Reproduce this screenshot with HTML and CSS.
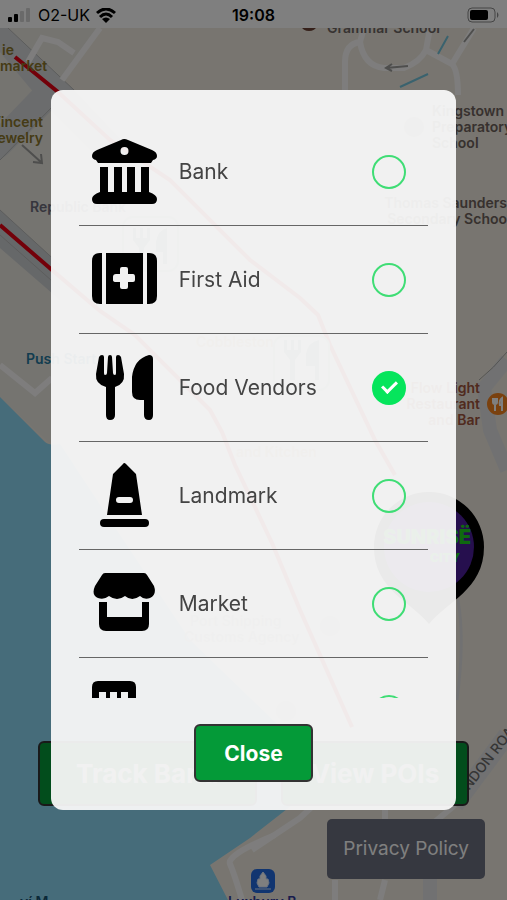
FILE: index.html
```html
<!DOCTYPE html>
<html lang="en">
<head>
  <meta charset="UTF-8">
  <meta name="viewport" content="width=device-width, initial-scale=1.0">
  <title>Points of Interest</title>
  <link rel="stylesheet" href="styles.css">
</head>
<body>
  <div class="screen">
    <!-- Map -->
    <svg class="map" viewBox="0 0 507 900" preserveAspectRatio="xMidYMid slice" aria-hidden="true">
      <rect width="507" height="900" fill="#f0ebe0"/>
      <path d="M0 28H100L60 88 52 445 0 397Z" fill="#eae8e1"/>
      <path d="M0 397 45 442Q50 446 60 444L110 520 190 640 330 775 287 809 250 838 210 865 228 900H0Z" fill="#8cd8f4"/>
      <path d="M-20 28 8 28 74 90 140 160 120 180 40 100Z" fill="#d6d8da"/>
      <path d="M50 72 70 92 8 154 0 160V124Z" fill="#d6d8da"/>
      <path d="M0 210 60 265V300L0 248Z" fill="#cdd0d2"/>
      <path d="M8 28 74 90M0 210 60 265M0 235 60 288M0 160 54 105" fill="none" stroke="#b9bab9" stroke-width="1"/>
      <g fill="none" stroke="#fcfbfa" stroke-width="6">
        <path d="M100 28 62 80M28 62 42 38 58 42 74 53"/>
        <path d="M0 365 35 393 52 378"/>
        <path d="M345 90V62Q345 44 360 42Q364 66 384 68H404Q420 62 426 50L430 28M426 50 452 64Q458 70 458 95M452 64 474 28M360 42 364 28"/>
        <path d="M252 850 300 818 384 740M385 810V820M455 805 425 830M335 880V900M385 880 380 900"/>
        <path d="M275 835Q226 855 230 864T242 900"/>
      </g>
      <g fill="none" stroke="#e3e3e4">
        <path d="M507 360 484 388 490 430 507 470" stroke-width="14"/>
        <path d="M458 600Q465 640 457 700" stroke-width="3"/>
        <path d="M455 805 507 735" stroke-width="18"/>
        <path d="M430 878V900" stroke-width="14"/>
      </g>
      <path d="M507 352Q494 368 479 380" fill="none" stroke="#a9a9a6" stroke-width="1"/>
      <path d="M400 87 428 74M438 54 448 36" stroke="#74c5dc" stroke-width="2"/>
      <path d="M408 66 386 68M392 64 386 68 392 71M22 145 42 163M41 154 42 163 33 162M464 42 474 29" fill="none" stroke="#9c9c9a" stroke-width="2"/>
      <path d="M15 57 58 92 110 140 170 180 250 260 300 298 318 315 330 345 375 440 395 475M0 225 52 270 100 311 135 335 210 410 222 432 235 465 272 543 300 610 352 727" fill="none" stroke="#e60012" stroke-width="4"/>
      <g class="map-text">
        <text x="2" y="55" fill="#8b762b">ie</text>
        <text x="0" y="71" fill="#8b762b">market</text>
        <text x="43" y="127" text-anchor="end" fill="#8b762b">Vincent</text>
        <text x="43" y="143" text-anchor="end" fill="#8b762b">Jewelry</text>
        <text x="327" y="33" fill="#6f6764">Grammar School</text>
        <text x="30" y="212" fill="#6d6c7b">Republic Bank</text>
        <text x="26" y="364" fill="#24799e">Push Start</text>
        <text x="432" y="116" fill="#6e625c">Kingstown</text>
        <text x="432" y="132" fill="#6e625c">Preparatory</text>
        <text x="432" y="148" fill="#6e625c">School</text>
        <text x="507" y="208" text-anchor="end" fill="#6e625c">Thomas Saunders</text>
        <text x="507" y="224" text-anchor="end" fill="#6e625c">Secondary Schoo</text>
        <text x="480" y="393" text-anchor="end" fill="#a1553d">Flow Light</text>
        <text x="480" y="409" text-anchor="end" fill="#a1553d">Restaurant</text>
        <text x="480" y="425" text-anchor="end" fill="#a1553d">and Bar</text>
        <text x="196" y="347" fill="#d9a577">Cobblestone</text>
        <text x="236" y="457" fill="#d9a577">and Kitchen</text>
        <text x="190" y="626" fill="#b8b6b4">Port Shipping</text>
        <text x="184" y="642" fill="#b8b6b4">Customs Agency</text>
        <text x="20" y="907" fill="#175170">ví M</text>
        <text x="228" y="907" fill="#303a9c">Luxbury B</text>
      </g>
      <text class="road-name" x="469" y="791" transform="rotate(-52 469 791)">NDON ROAD</text>
      <ellipse cx="309" cy="27" rx="7" ry="4" fill="#6b4034"/>
      <circle cx="498" cy="404" r="11" fill="#f5821f"/>
      <path d="M493 398V402Q493 404 495 404V411M497 398V402Q497 404 495 404V398M502 411V398Q499 400 500 405H502" fill="none" stroke="#fff" stroke-width="2"/>
      <circle cx="330" cy="626" r="10" fill="#c9c6c2"/>
      <circle cx="286" cy="711" r="10" fill="#c9c6c2"/>
      <circle cx="414" cy="127" r="10" fill="#b5aaa2"/>
      <rect x="251" y="869" width="24" height="24" rx="6" fill="#236be0"/>
      <path d="M263 872 266 876V879H268L269 883 267 887H259L257 883 258 879H260V876ZM255 889H271" fill="#fff" stroke="#d8e6ff"/>
      <g fill="none" stroke="#a5c6bd" stroke-width="2">
        <rect x="123" y="217" width="55" height="54" rx="10" fill="#f5f8f5"/>
        <rect x="274" y="336" width="55" height="54" rx="10" fill="#f5f8f5"/>
      </g>
      <g fill="#6d8f86">
        <path d="M133 228H136V238H140V228H143V238H147V228H150V240L144 248V264H139V248L133 240ZM167 228V264H163V252H156V242Q158 230 167 228"/>
        <path d="M284 340H287V350H291V340H294V350H298V340H301V352L295 360V380H290V360L284 352ZM319 340V380H315V366H306V354Q308 342 319 340"/>
      </g>
      <path d="M429 624 C412 602 374 590 374 547A55 55 0 0 1 484 547C484 590 446 602 429 624Z" fill="#000"/>
      <circle cx="429" cy="547" r="45" fill="#4c1e9c"/>
      <text class="pin-text" x="471" y="544" text-anchor="end">SUNRISË</text>
      <text class="pin-text pin-small" x="460" y="562" text-anchor="end">CITY</text>
    </svg>

    <header class="status-bar">
      <div class="carrier">
        <svg width="24" height="14" viewBox="0 0 24 14" aria-hidden="true">
          <rect x="0" y="9" width="4" height="5" rx="1"/>
          <rect x="6" y="6" width="4" height="8" rx="1"/>
          <rect x="12" y="3" width="4" height="11" rx="1" fill="#d4d4d4"/>
          <rect x="18" y="0" width="4" height="14" rx="1" fill="#d4d4d4"/>
        </svg>
        <span>O2-UK</span>
        <svg width="20" height="15" viewBox="0 0 20 15" aria-hidden="true">
          <path d="M1 5Q10 -3 19 5M4 9Q10 3 16 9" fill="none" stroke="#000" stroke-width="3"/>
          <path d="M10 15 6 11Q10 8 14 11Z"/>
        </svg>
      </div>
      <time>19:08</time>
      <svg class="battery" width="32" height="16" viewBox="0 0 32 16" aria-hidden="true">
        <rect x="1" y="1" width="27" height="14" rx="4" fill="none" stroke="#8a8a8a"/>
        <rect x="3" y="3" width="18" height="10" rx="2"/>
        <path d="M30 5Q33 8 30 11Z" fill="#8a8a8a"/>
      </svg>
    </header>

    <div class="bottom-controls">
      <div class="actions">
        <button type="button" class="btn btn-track">Track Band</button>
        <button type="button" class="btn btn-pois">View POIs</button>
      </div>
      <a class="privacy" href="#privacy">Privacy Policy</a>
    </div>
  </div>

  <!-- POI filter modal -->
  <div class="overlay">
    <div class="modal" role="dialog" aria-label="View POIs">
      <div class="poi-list">
        <label class="poi">
          <svg class="poi-icon" viewBox="0 0 65 65" aria-hidden="true">
            <path fill-rule="evenodd" d="M29 1Q32 -1 36 1L60 11Q65 13 65 17Q65 20 61 21L59 24H6L4 21Q0 20 0 17Q0 13 5 11ZM32.500 8A4 4 0 1 0 32.500 16A4 4 0 1 0 32.500 8Z"/>
            <path d="M8 28H16V53H22V28H30V53H35V28H43V53H49V28H57V53Q65 56 65 60Q65 65 60 65H5Q0 65 0 60Q0 56 8 53Z"/>
          </svg>
          <span class="poi-name">Bank</span>
          <input type="checkbox" name="poi" value="bank">
        </label>
        <label class="poi">
          <svg class="poi-icon" viewBox="0 0 65 65" aria-hidden="true">
            <path d="M10 6V57H8Q0 57 0 49V14Q0 6 8 6ZM55 6H57Q65 6 65 14V49Q65 57 57 57H55Z"/>
            <path fill-rule="evenodd" d="M14 6H51V57H14ZM30 20Q28 20 28 22V27H24Q21 27 21 30V33Q21 35 24 35H28V40Q28 42 30 42H34Q36 42 36 40V35H41Q43 35 43 33V30Q43 27 41 27H36V22Q36 20 34 20Z"/>
          </svg>
          <span class="poi-name">First Aid</span>
          <input type="checkbox" name="poi" value="first-aid">
        </label>
        <label class="poi">
          <svg class="poi-icon" viewBox="0 0 65 65" aria-hidden="true">
            <path d="M7 2Q8 0 10 0Q12 0 12 2V18Q12 20 13 20Q15 20 15 18L16 2Q16 0 18 0Q20 0 20 2L21 18Q21 20 23 20Q24 20 24 18V2Q24 0 26 0Q28 0 29 2L32 19Q33 29 23 32V60Q23 65 18 65Q14 65 14 60V32Q3 29 4 19Z"/>
            <path d="M57 0Q61 0 61 4V60Q61 65 57 65Q52 65 52 60V45H48Q40 45 40 37V22Q42 4 57 0Z"/>
          </svg>
          <span class="poi-name">Food Vendors</span>
          <input type="checkbox" name="poi" value="food-vendors" checked>
        </label>
        <label class="poi">
          <svg class="poi-icon" viewBox="0 0 65 65" aria-hidden="true">
            <path fill-rule="evenodd" d="M31 1Q32 -1 34 1L44 11 50 52H15L21 11ZM27 34A3 3 0 0 0 27 40H38A3 3 0 0 0 38 34Z"/>
            <rect x="8" y="56" width="49" height="8" rx="4"/>
          </svg>
          <span class="poi-name">Landmark</span>
          <input type="checkbox" name="poi" value="landmark">
        </label>
        <label class="poi">
          <svg class="poi-icon" viewBox="0 0 65 65" aria-hidden="true">
            <path d="M13 2H52Q54 2 55 4L62 15Q65 24 58 27Q52 29 48 25Q40 31 33 25Q25 31 17 25Q12 29 6 27Q-1 24 3 15L10 4Q11 2 13 2Z"/>
            <path d="M7 31H15V46H50V31H57V53Q57 60 50 60H14Q7 60 7 53Z"/>
          </svg>
          <span class="poi-name">Market</span>
          <input type="checkbox" name="poi" value="market">
        </label>
        <label class="poi">
          <svg class="poi-icon" viewBox="0 0 65 65" aria-hidden="true">
            <path fill-rule="evenodd" d="M6 2H38Q44 2 44 8V65H0V8Q0 2 6 2ZM7 13V21H14V13ZM18 13V21H25V13ZM29 13V21H36V13Z"/>
          </svg>
          <span class="poi-name">Offices</span>
          <input type="checkbox" name="poi" value="offices">
        </label>
      </div>
      <button type="button" class="btn btn-close">Close</button>
    </div>
  </div>
</body>
</html>
```
FILE: styles.css
```css
* {
  box-sizing: border-box;
}
body {
  margin: 0;
  font-family: Inter, "Liberation Sans", sans-serif;
  background-color: #f0ebe0;
}

/* Map screen */
.screen {
  position: relative;
  display: flex;
  flex-direction: column;
  justify-content: space-between;
  height: 100vh;
  overflow: hidden;
}
.map {
  position: absolute;
  inset: 0;
  width: 100%;
  height: 100%;
}
.map-text {
  font-size: 14px;
  font-weight: 600;
}
.road-name {
  font-size: 14px;
  font-weight: 500;
  fill: #6b6b6b;
}
.pin-text {
  font-size: 20px;
  font-weight: 900;
  fill: #1fd21f;
}
.pin-small {
  font-size: 12px;
}
.status-bar {
  position: relative;
  display: grid;
  grid-template-columns: 1fr auto 1fr;
  align-items: center;
  height: 28px;
  padding: 2px 8px 0;
  background-color: #fff;
  font-size: 16px;
}
.carrier {
  display: flex;
  align-items: center;
  gap: 6px;
}
.status-bar time {
  font-weight: 600;
}
.battery {
  justify-self: end;
}
.bottom-controls {
  position: relative;
  display: flex;
  flex-direction: column;
  align-items: flex-end;
  gap: 13px;
  padding: 0 22px 21px;
}
.actions {
  display: flex;
  gap: 24px;
  width: 100%;
  padding: 0 16px;
}
.btn {
  border: 2px solid #333;
  border-radius: 6px;
  background-color: #049a38;
  color: #fff;
  font-family: inherit;
  font-weight: 600;
  cursor: pointer;
}
.btn-track, .btn-pois {
  height: 65px;
  padding: 0;
  font-size: 26px;
  font-weight: 700;
}
.btn-track {
  flex: 7;
}
.btn-pois {
  flex: 6;
}
.privacy {
  padding: 18px 16px;
  border-radius: 5px;
  background-color: #6c7080;
  color: #fff;
  font-size: 19px;
  line-height: 24px;
  text-decoration: none;
}

/* Modal */
.overlay {
  position: fixed;
  inset: 0;
  display: flex;
  align-items: center;
  justify-content: center;
  background-color: rgba(0, 0, 0, 0.5);
}
.modal {
  display: flex;
  flex-direction: column;
  align-items: center;
  gap: 26px;
  width: 80%;
  height: 80%;
  padding: 28px;
  border-radius: 12px;
  background-color: rgba(249, 249, 249, 0.94);
}
.poi-list {
  flex: 1;
  width: 100%;
  min-height: 0;
  overflow-y: auto;
  scrollbar-width: none;
}
.poi {
  display: flex;
  align-items: center;
  gap: 22px;
  padding: 21px 22px 21px 13px;
  border-bottom: 1px solid #666;
  cursor: pointer;
}
.poi-icon {
  flex: none;
  width: 65px;
  height: 65px;
}
.poi-name {
  flex: 1;
  color: #444;
  font-size: 21px;
}
.poi input {
  display: grid;
  place-items: center;
  width: 34px;
  height: 34px;
  margin: 0;
  border: 2px solid #3fdd75;
  border-radius: 50%;
  appearance: none;
  cursor: pointer;
}
.poi input:checked {
  border-color: #06e55c;
  background-color: #06e55c;
}
.poi input:checked::after {
  content: "";
  width: 6px;
  height: 12px;
  margin-bottom: 4px;
  border: solid #fff;
  border-width: 0 3px 3px 0;
  transform: rotate(45deg);
}
.btn-close {
  height: 58px;
  padding: 0 28px;
  font-size: 21px;
  font-weight: 700;
}
```
